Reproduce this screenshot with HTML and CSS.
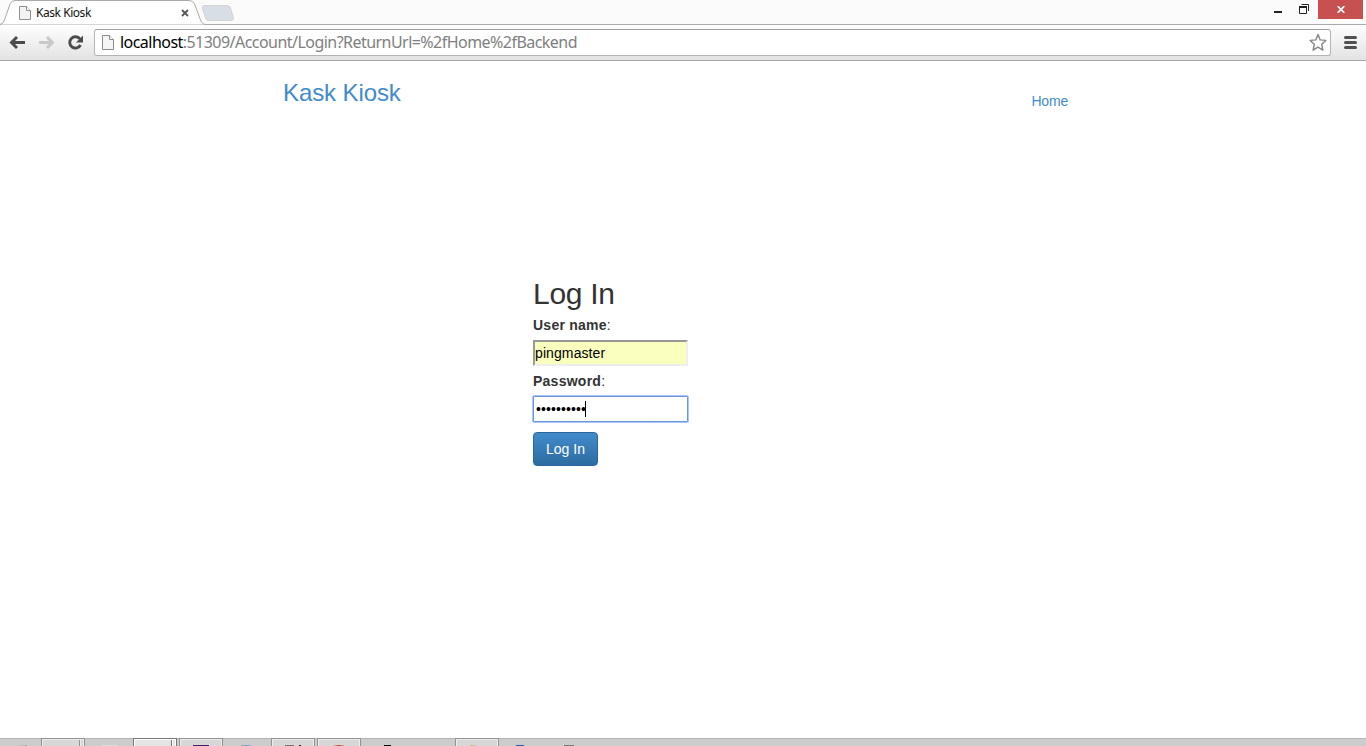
FILE: index.html
```html
<!DOCTYPE html>
<html lang="en">
<head>
<meta charset="utf-8">
<title>Kask Kiosk</title>
<link rel="stylesheet" href="styles.css">
</head>
<body>
<div class="window">
  <header class="tabstrip">
    <svg class="tab-shape" width="240" height="25" viewBox="0 0 240 25">
      <path d="M0 24.5 Q3 24 4.500 20 L10 4 Q11.500 .5 15 .5 H189 Q193 .5 194.500 4 L200.500 20 Q202 24.500 206 24.500" fill="#fff" stroke="#aaa"/>
      <path d="M205 5.500 H227 Q229.500 5.500 230.500 8 L233.200 17 Q234 20.500 231.500 20.500 H209 Q206.500 20.500 205.500 18 L202.500 9 Q201.500 5.500 205 5.500Z" fill="#d8dee6" stroke="#d2d4d8"/>
    </svg>
    <div class="tab">
      <svg width="12" height="14" viewBox="0 0 12 14"><path d="M.5.5H7.500L11.500 4.500V13.500H.5Z" fill="#f3f3f3" stroke="#909090"/><path d="M7.500.5V4.500H11.500" fill="#fff" stroke="#909090"/></svg>
      <span class="tab-title">Kask Kiosk</span>
      <svg class="tab-close" width="8" height="8" viewBox="0 0 8 8"><path d="M1 1 7 7M7 1 1 7" stroke="#555" stroke-width="1.800"/></svg>
    </div>
    <div class="controls">
      <svg width="48" height="19" viewBox="0 0 48 19"><path d="M4 12H12" stroke="#222" stroke-width="2"/><path d="M31.500 4.500H38.500V11" fill="none" stroke="#222"/><path d="M29.500 6.500H36.500V13.500H29.500Z" fill="none" stroke="#222"/><path d="M29 7H37" stroke="#222" stroke-width="2"/></svg>
      <div class="close"><svg width="8" height="7" viewBox="0 0 8 7"><path d="M.7.2 7.300 6.800M7.300.2.7 6.800" stroke="#fff" stroke-width="1.700"/></svg></div>
    </div>
  </header>
  <nav class="toolbar">
    <svg class="nav-icons" width="94" height="36" viewBox="0 0 94 36">
      <g fill="none" stroke-width="2.900" stroke="#4b4b4b"><path d="M17 12 11.500 17.500 17 23M12 17.500H25"/><path d="M47 12 52.500 17.500 47 23M39 17.500H52" stroke="#c9c9c9"/><path d="M80 14A5.700 5.700 0 1 0 80.500 20"/></g><path d="M83 10.500V17.500H76Z" fill="#4b4b4b"/>
    </svg>
    <div class="address">
      <svg width="12" height="15" viewBox="0 0 12 15"><path d="M.5.5H7.500L11.500 4.500V14.500H.5Z" fill="#f5f5f5" stroke="#8c8c8c"/><path d="M7.500.5V4.500H11.500" fill="#fff" stroke="#8c8c8c"/></svg>
      <span class="url"><span class="host">localhost</span>:51309/Account/Login?ReturnUrl=%2fHome%2fBackend</span>
      <svg class="star" width="20" height="19" viewBox="0 0 20 19"><path d="M10 1.500 12.200 6.900 17.800 7.400 13.700 11.300 14.900 17.200 10 14.200 5.100 17.200 6.300 11.300 2.200 7.400 7.800 6.900Z" fill="#fff" stroke="#868686" stroke-width="1.400" stroke-linejoin="round"/></svg>
    </div>
    <svg class="menu" width="13" height="13" viewBox="0 0 13 13"><path d="M1.500 1.500H11.500M1.500 6.500H11.500M1.500 11.500H11.500" stroke="#505050" stroke-width="3" stroke-linecap="round"/></svg>
  </nav>
  <main class="page">
    <div class="site-header"><a class="brand">Kask Kiosk</a><a class="home">Home</a></div>
    <form class="login">
      <h1>Log In</h1>
      <div class="label"><b>User name</b>:</div>
      <div class="field filled">pingmaster</div>
      <div class="label"><b>Password</b>:</div>
      <div class="field focused"><span class="dots">••••••••••</span><span class="caret"></span></div>
      <button type="button" class="submit">Log In</button>
    </form>
  </main>
  <footer class="taskbar">
    <div class="slot start"><i class="sliver faded"></i></div>
    <div class="slot open stack"></div>
    <div class="slot"><i class="sliver pale"></i></div>
    <div class="slot open stack active"></div>
    <div class="slot open"><i class="sliver purple"></i></div>
    <div class="slot"><i class="sliver sky"></i></div>
    <div class="slot open"><i class="sliver tools"></i></div>
    <div class="slot open"><i class="sliver red"></i></div>
    <div class="slot"><i class="sliver black"></i></div>
    <div class="slot"></div>
    <div class="slot open"><i class="sliver tan"></i></div>
    <div class="slot"><i class="sliver blue"></i></div>
    <div class="slot"><i class="sliver grey"></i></div>
  </footer>
</div>
</body>
</html>
```

FILE: styles.css
```css
* { box-sizing: border-box; }
body { margin: 0; font-family: "Liberation Sans", Arial, sans-serif; font-size: 14px; color: #333; background: #fff; }
svg { display: block; flex: none; }
.window { display: flex; flex-direction: column; height: 746px; overflow: hidden; }
.tabstrip { position: relative; display: flex; justify-content: space-between; height: 25px; background: #fbfbfb; border-bottom: 1px solid #aaa; }
.tab-shape { position: absolute; left: 0; top: 0; }
.tab { position: relative; display: flex; align-items: center; width: 200px; height: 24px; padding: 2px 0 0 19px; }
.tab-title { width: 144px; margin-left: 5px; font: 12px/16px "Noto Sans", sans-serif; letter-spacing: -.45px; color: #111; white-space: nowrap; }
.tab-close { margin-left: 1px; }
.controls { display: flex; height: 19px; }
.close { display: flex; align-items: center; justify-content: center; width: 45px; background: #c75050; margin-right: 3px; }
.toolbar { display: flex; height: 36px; background: linear-gradient(#fefefe, #e3e3e3); border-bottom: 1px solid #a5a5a5; }
.address { display: flex; align-items: center; width: 1237px; height: 27px; margin-top: 4px; padding: 0 2px 0 7px; background: #fff; border: 1px solid #b4b4b4; border-top-color: #a0a0a0; border-radius: 3px; }
.url { margin: 0 0 2px 6px; font: 16px/22px "Noto Sans", sans-serif; letter-spacing: -.54px; color: #808080; white-space: nowrap; }
.host { color: #000; }
.star { margin-left: auto; }
.menu { margin: 11px 0 0 13px; }
.page { flex: 1; min-height: 0; }
.site-header { display: flex; justify-content: space-between; padding: 18px 298px 0 283px; height: 58px; }
.brand { font-size: 24px; line-height: 28px; letter-spacing: -.1px; color: #428bca; }
.home { margin-top: 12px; line-height: 20px; letter-spacing: -.2px; color: #428bca; }
.login { margin: 158px 0 0 533px; width: 156px; }
h1 { margin: 0; font-size: 30px; font-weight: 400; line-height: 33px; letter-spacing: -.3px; }
.label { margin-top: 5px; height: 20px; line-height: 20px; }
.label b { letter-spacing: .25px; }
.field { display: flex; align-items: center; width: 155px; height: 26px; margin-top: 5px; padding: 0 0 1px; color: #000; background: #fff; border: 2px inset #eee; letter-spacing: .1px; white-space: nowrap; }
.filled { background: #faffbd; border-color: #999 #eee #eee #999; border-style: solid; }
.focused { width: 157px; height: 28px; margin: 4px 0 0 -1px; padding: 0 0 0 1px; border: 1px solid #aac5f6; border-radius: 2px; box-shadow: inset 0 0 0 1px #6b96de; }
.dots { width: 52px; padding-left: 2px; font-size: 14px; letter-spacing: .1px; }
.caret { width: 1px; height: 16px; background: #000; margin-left: -1px; }
.submit { display: block; width: 65px; height: 34px; margin-top: 9px; padding: 0; font: 14px/20px "Liberation Sans", Arial, sans-serif; color: #fff; background: linear-gradient(#428bca, #2d6ca2); border: 1px solid #2b669a; border-radius: 4px; }
.taskbar { display: flex; height: 8px; background: #ccc; border-top: 1px solid #b4b4b4; }
.slot { display: flex; align-items: flex-end; flex: none; width: 44px; height: 8px; margin: -1px 2px 0 0; }
.start { width: 41px; margin-right: 0; padding-left: 18px; }
.open { border: 1px solid #929292; border-bottom: 0; background: #d7d7d7; box-shadow: inset 0 1px #ededed, inset 1px 0 #ededed, inset -1px 0 #ededed; }
.stack { background: linear-gradient(90deg, transparent 37px, #929292 37px 38px, #eee 38px 39px, transparent 39px), #d7d7d7; }
.active { border-color: #777; background: linear-gradient(90deg, transparent 37px, #777 37px 38px, #fff 38px 39px, transparent 39px), #e4e4e4; box-shadow: inset 0 1px #fff, inset 1px 0 #fff, inset -1px 0 #fff; }
.sliver { display: block; width: 10px; height: 1px; margin-left: 15px; }
.faded { width: 9px; margin-left: 0; background: linear-gradient(90deg, #ccc, #aaa); }
.pale { width: 16px; margin-left: 14px; background: #ddd; }
.purple { width: 16px; margin-left: 13px; background: #4b1870; }
.sky { margin-left: 16px; background: linear-gradient(90deg, #aac, #58a9d0, #aac); }
.tools { width: 17px; margin-left: 13px; background: linear-gradient(90deg, #777 9px, transparent 9px 14px, #700018 14px 16px, transparent 16px); }
.red { margin-left: 16px; background: linear-gradient(90deg, #daa, #c42, #daa); }
.black { width: 7px; margin-left: 21px; background: #000; }
.tan { width: 5px; margin-left: 14px; background: #cdbd8d; }
.blue { width: 8px; background: #2458a8; }
.grey { margin-left: 17px; background: #777; }
```
